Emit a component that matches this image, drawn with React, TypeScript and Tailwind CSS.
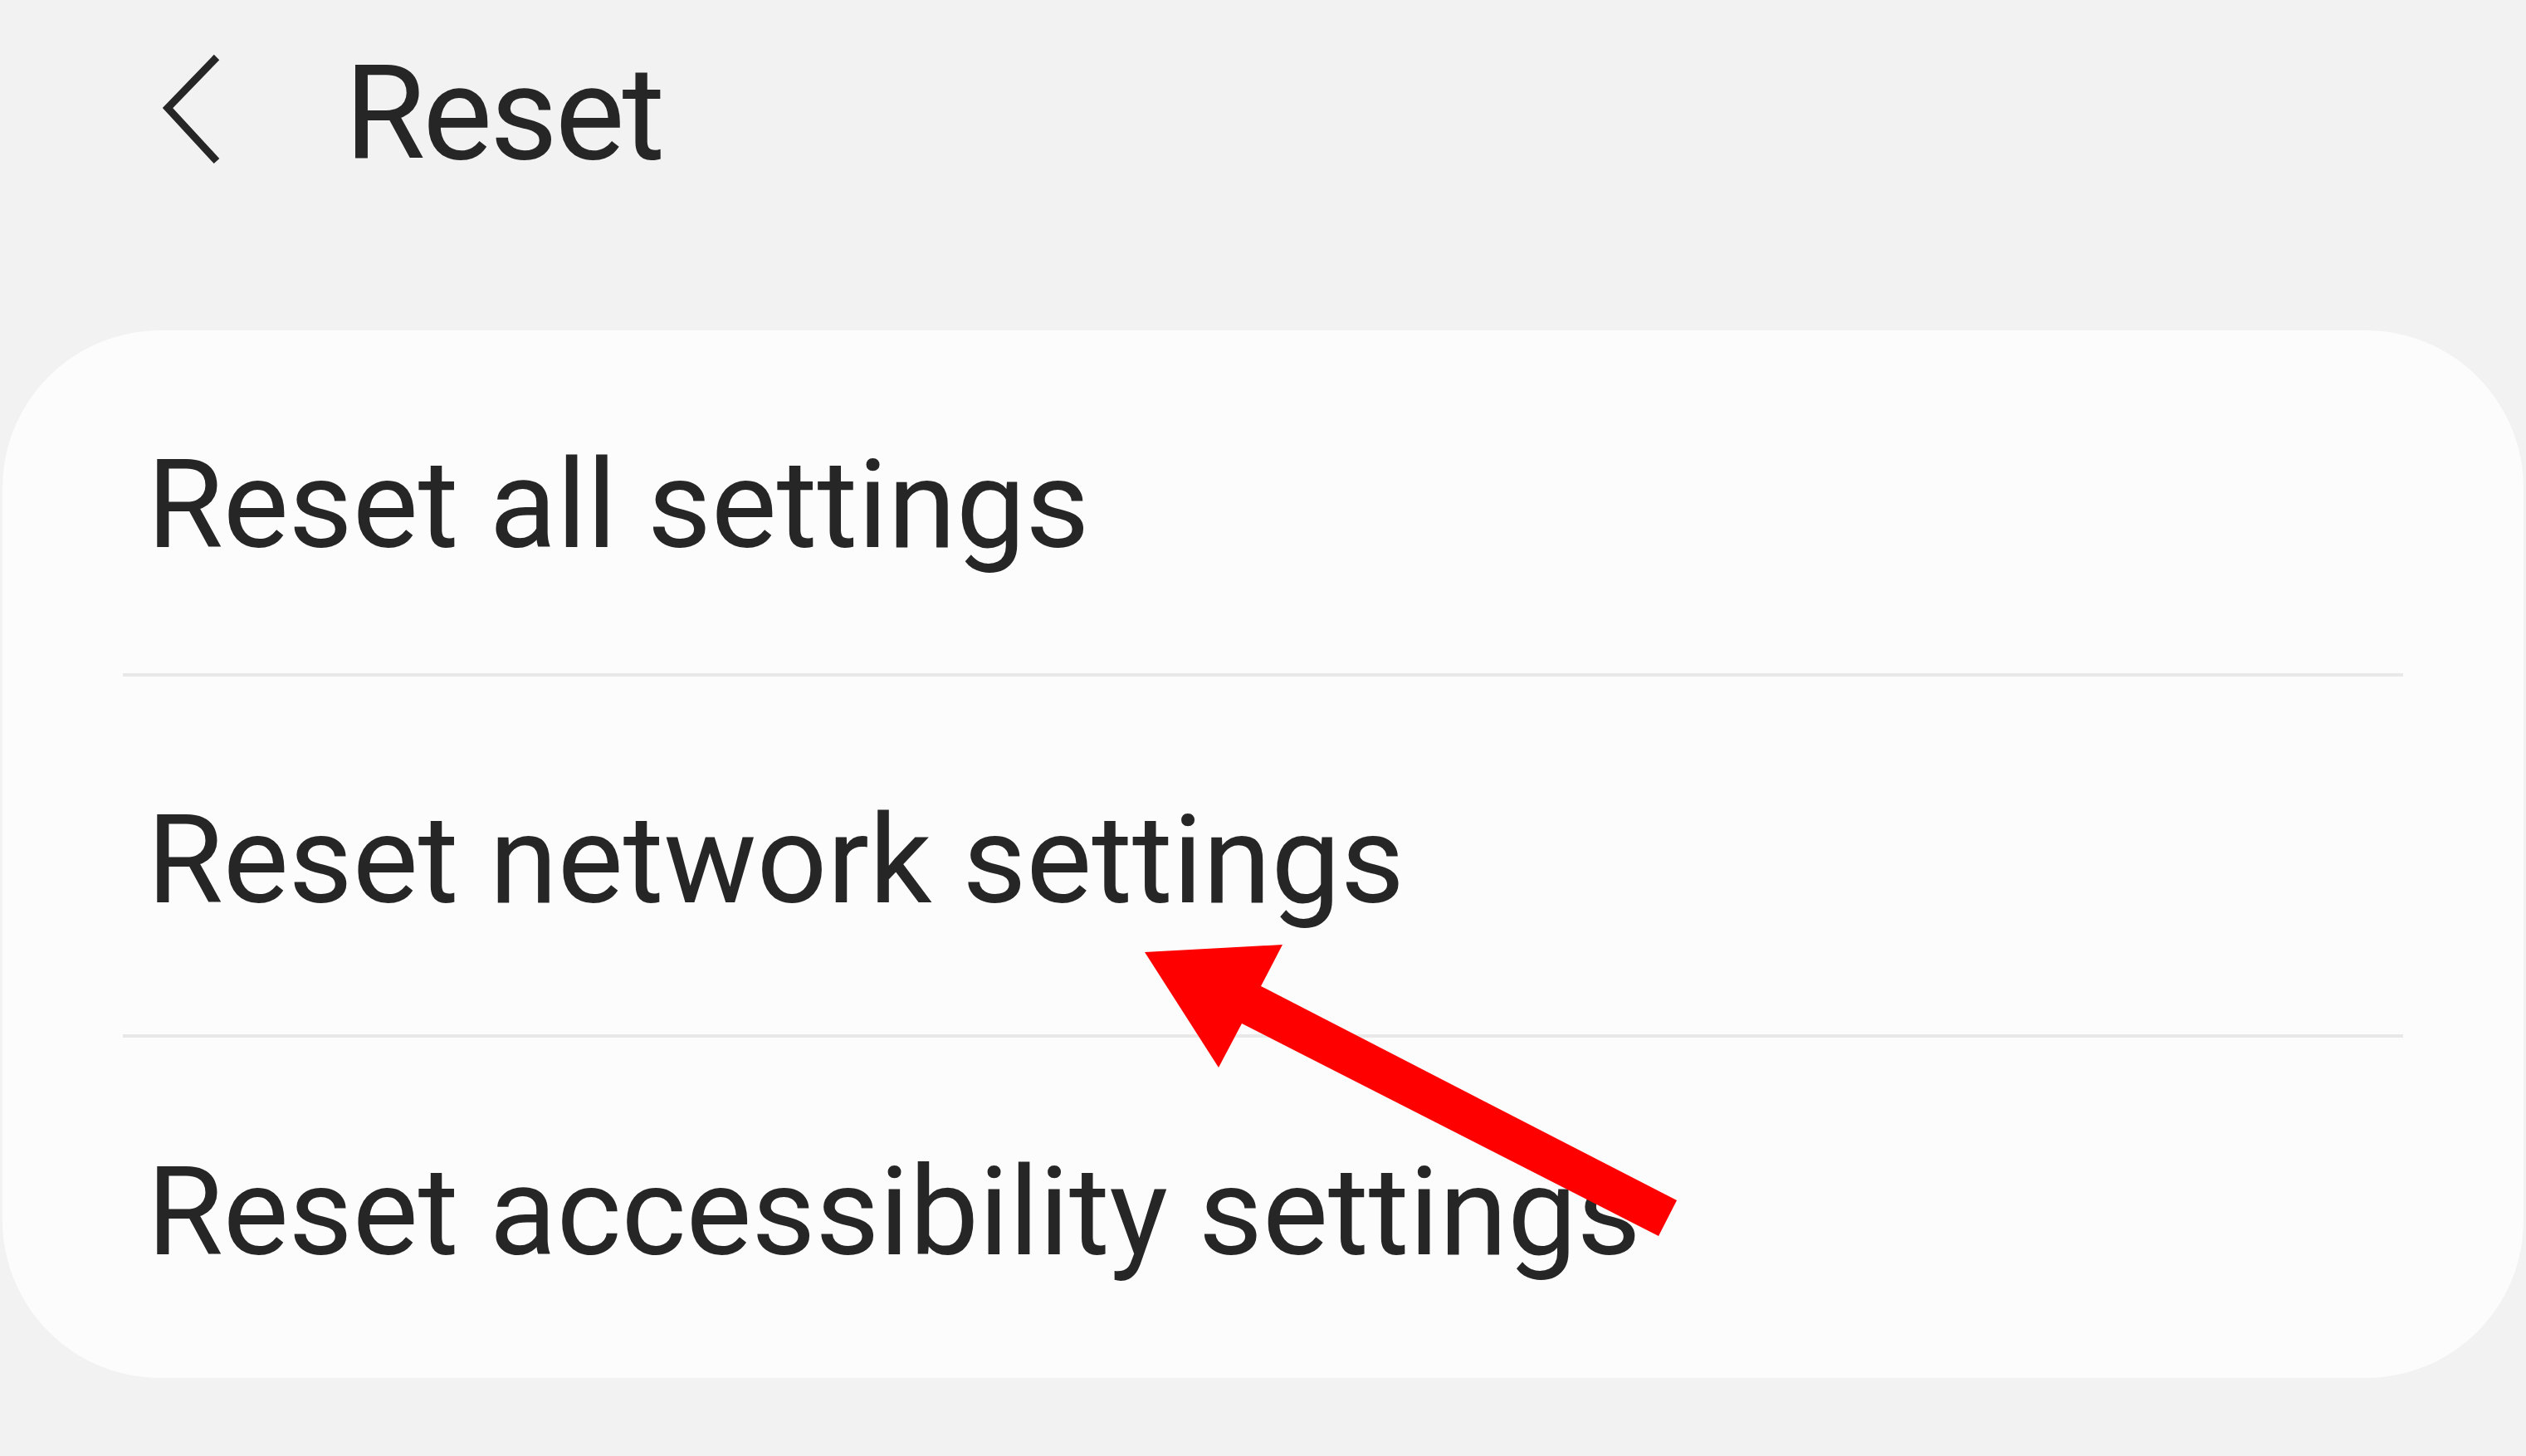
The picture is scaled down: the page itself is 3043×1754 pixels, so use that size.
export default function App() {
  const items = [
    { label: "Reset all settings", row: "h-[413px] pt-[8px]" },
    { label: "Reset network settings", row: "h-[431px] pt-[11px]" },
    { label: "Reset accessibility settings", row: "h-[410px] pt-[10px]" },
  ];

  return (
    <div
      className="relative min-h-screen w-full overflow-hidden bg-[#f2f2f2] text-[#262626]"
      style={{ fontFamily: "Roboto, 'Noto Sans', Arial, sans-serif" }}
    >
      {/* header */}
      <div className="flex h-[398px] items-start pl-[190px] pt-[58px]">
        <svg className="mt-[2px] h-[140px] w-[80px] shrink-0" viewBox="190 60 80 140" fill="none">
          <polyline
            points="261,69 202,130 261,194"
            stroke="#262626"
            strokeWidth="9"
            strokeLinecap="butt"
            strokeLinejoin="miter"
          />
        </svg>
        <h1 className="ml-[145px] text-[158px] font-normal leading-none tracking-[-3px]">Reset</h1>
      </div>

      {/* list card */}
      <div className="mx-[3px] h-[1262px] rounded-[190px] bg-[#fcfcfc]">
        {items.map((item, i) => (
          <div key={item.label}>
            {i > 0 && <div className="mx-[145px] h-[4px] bg-[#e8e8e8]" />}
            <div className={`flex items-center pl-[174px] ${item.row}`}>
              <span className="text-[149px] leading-none">{item.label}</span>
            </div>
          </div>
        ))}
      </div>

      {/* red annotation arrow */}
      <svg className="pointer-events-none absolute left-0 top-0 h-[1754px] w-[3043px]" viewBox="0 0 3043 1754">
        <polygon
          points="1379,1147 1545,1138 1519,1188 2020,1446 1998,1489 1496,1233 1468,1286"
          fill="#ff0000"
        />
      </svg>
    </div>
  );
}
